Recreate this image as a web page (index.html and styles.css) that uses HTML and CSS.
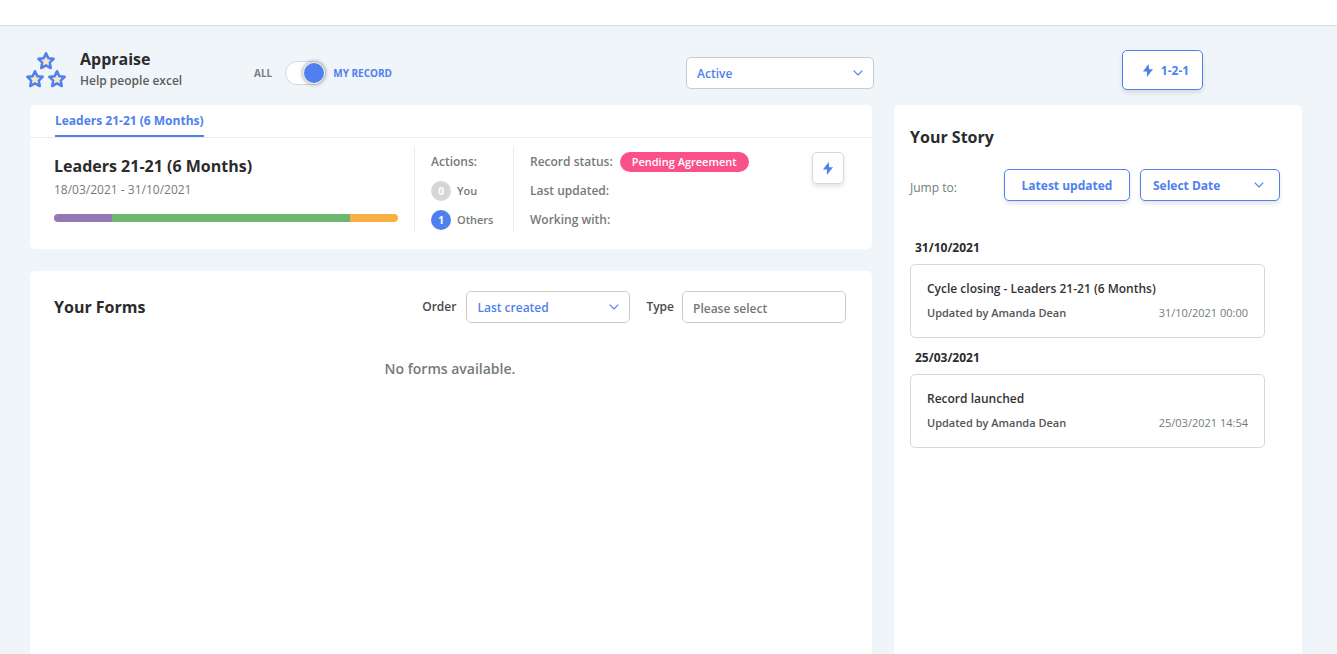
FILE: index.html
```html
<!DOCTYPE html>
<html lang="en">
<head>
<meta charset="utf-8">
<title>Appraise</title>
<link rel="stylesheet" href="styles.css">
</head>
<body>
<svg class="sprite" aria-hidden="true">
  <symbol id="bolt" viewBox="0 0 10 13"><path d="M5.6 0 0 7.6h3.9L3.9 13 10 5.2H6.2Z" fill="currentColor"/></symbol>
  <symbol id="chevron" viewBox="0 0 10 6"><path d="M.7.7 5 5 9.3.7" fill="none" stroke="currentColor" stroke-width="1.2"/></symbol>
  <symbol id="star" viewBox="0 0 20 20"><path d="M10 2.3l2.3 4.9 5.3.7-3.9 3.7 1 5.4-4.7-2.6-4.7 2.6 1-5.4-3.9-3.7 5.3-.7z" fill="#f5e6c8" stroke="#4f80ee" stroke-width="2.6" stroke-linejoin="round"/><path d="M10 6l1.4 2.8 3 .4-2.2 2.1.6 3-2.8-1.5-2.8 1.5.6-3-2.2-2.1 3-.4z" fill="#f5e6c8"/></symbol>
</svg>
<div class="topbar"></div>
<header class="header">
  <div class="header-main">
    <svg class="logo" viewBox="0 0 40 38" aria-hidden="true">
      <use href="#star" x="10" y="0" width="20" height="20"/>
      <use href="#star" x="-1" y="18" width="20" height="20"/>
      <use href="#star" x="21" y="18" width="20" height="20"/>
    </svg>
    <div class="brand">
      <h1 class="title">Appraise</h1>
      <p class="tagline">Help people excel</p>
    </div>
    <label class="toggle">
      <span>ALL</span>
      <input class="switch" type="checkbox" role="switch" checked>
      <span class="toggle-on">MY RECORD</span>
    </label>
    <div class="select-wrap status-filter">
      <select class="field" aria-label="Status"><option>Active</option></select>
      <svg class="chevron"><use href="#chevron"/></svg>
    </div>
  </div>
  <div class="header-side">
    <button class="btn btn-large"><svg class="bolt"><use href="#bolt"/></svg>1-2-1</button>
  </div>
</header>
<main class="columns">
  <div class="main-column">
    <section class="panel">
      <nav class="tabs"><a class="tab" href="#record">Leaders 21-21 (6 Months)</a></nav>
      <div class="record" id="record">
        <div class="summary">
          <h2 class="title">Leaders 21-21 (6 Months)</h2>
          <p class="dates">18/03/2021 - 31/10/2021</p>
          <div class="progress">
            <span class="purple" style="width:17%"></span>
            <span class="green" style="width:69%"></span>
            <span class="orange" style="width:14%"></span>
          </div>
        </div>
        <div class="facts actions">
          <p>Actions:</p>
          <p class="tally"><span class="count">0</span>You</p>
          <p class="tally"><span class="count count-active">1</span>Others</p>
        </div>
        <div class="facts details">
          <p>Record status: <span class="pill">Pending Agreement</span></p>
          <p>Last updated:</p>
          <p>Working with:</p>
        </div>
        <button class="icon-btn" aria-label="Quick actions"><svg class="bolt"><use href="#bolt"/></svg></button>
      </div>
    </section>
    <section class="panel forms">
      <div class="forms-head">
        <h2 class="title">Your Forms</h2>
        <label for="order">Order</label>
        <div class="select-wrap forms-field">
          <select class="field" id="order"><option>Last created</option></select>
          <svg class="chevron"><use href="#chevron"/></svg>
        </div>
        <label class="type-label" for="type">Type</label>
        <input class="field forms-field" id="type" type="text" placeholder="Please select">
      </div>
      <p class="empty">No forms available.</p>
    </section>
  </div>
  <aside class="panel story">
    <h2 class="title">Your Story</h2>
    <div class="jump">
      <span class="jump-label">Jump to:</span>
      <button class="btn btn-latest">Latest updated</button>
      <div class="select-wrap">
        <select class="btn date-select" aria-label="Select date"><option>Select Date</option></select>
        <svg class="chevron date-chevron"><use href="#chevron"/></svg>
      </div>
    </div>
    <h3 class="day">31/10/2021</h3>
    <article class="event">
      <p class="event-name">Cycle closing - Leaders 21-21 (6 Months)</p>
      <p class="event-meta"><span>Updated by Amanda Dean</span><time>31/10/2021 00:00</time></p>
    </article>
    <h3 class="day">25/03/2021</h3>
    <article class="event">
      <p class="event-name">Record launched</p>
      <p class="event-meta"><span>Updated by Amanda Dean</span><time>25/03/2021 14:54</time></p>
    </article>
  </aside>
</main>
</body>
</html>
```
FILE: styles.css
```css
* { box-sizing: border-box; }
body {
  margin: 0;
  min-height: 100vh;
  display: flex;
  flex-direction: column;
  background: #f0f5fa;
  color: #4a4a4a;
  font: 600 12px/20px "Open Sans", sans-serif;
}
h1, h2, h3, p { margin: 0; }
button, select, input { font: inherit; margin: 0; }
.sprite { position: absolute; width: 0; height: 0; }
.topbar { height: 26px; background: #fff; border-bottom: 1px solid #d9dcdf; }
.title { font-size: 16px; line-height: 24px; font-weight: 700; color: #2b2b2b; }

.header, .columns {
  display: grid;
  grid-template-columns: minmax(0, 1fr) 408px;
  column-gap: 22px;
  padding: 0 35px 0 30px;
}
.header { height: 79px; }
.header-main { display: flex; align-items: center; padding-top: 14px; margin: 0 -2px 0 -4px; }
.header-side { display: flex; justify-content: flex-end; align-items: center; padding: 8px 99px 0 0; }
.logo { width: 40px; height: 38px; margin: 0 14px 5px 0; }
.brand { width: 174px; padding-bottom: 8px; }
.tagline { color: #5a5e60; }
.toggle { display: flex; align-items: center; gap: 7px; font-size: 10px; font-weight: 700; color: #7b7f82; }
.toggle > :first-child { margin-right: 6px; }
.toggle-on { color: #4f80ee; }
.switch {
  appearance: none;
  width: 41px;
  height: 24px;
  padding: 1px;
  border: 1px solid #d5d8da;
  border-radius: 12px;
  background: #fff;
}
.switch::before {
  content: "";
  display: block;
  width: 20px;
  height: 20px;
  margin-left: auto;
  border-radius: 50%;
  background: #4f80ee;
  box-shadow: 0 0 0 1px #eee, 0 0 4px 1px #888;
}
.select-wrap { position: relative; }
.status-filter { width: 188px; margin-left: auto; }
.field {
  appearance: none;
  display: block;
  width: 100%;
  height: 32px;
  padding: 2px 10px 0;
  border: 1px solid #c9cbcc;
  border-radius: 5px;
  background: #fff;
  color: #4f80ee;
}
.field::placeholder { color: #757575; opacity: 1; }
.chevron { position: absolute; right: 11px; top: 13px; width: 10px; height: 6px; color: #4f80ee; pointer-events: none; }
.bolt { width: 10px; height: 13px; color: #4f80ee; }
.btn {
  display: flex;
  align-items: center;
  justify-content: center;
  height: 32px;
  padding: 2px 16px 0;
  border: 1px solid #4f80ee;
  border-radius: 5px;
  background: #fff;
  color: #4f80ee;
  font-weight: 700;
  box-shadow: 0 3px 4px rgba(0, 0, 0, .1);
}
.btn-large { width: 81px; height: 40px; gap: 8px; padding: 2px 0 0 7px; }
.btn-latest { width: 126px; }

.columns { flex: 1; }
.main-column { display: flex; flex-direction: column; gap: 22px; }
.panel { background: #fff; border-radius: 5px; }
.tabs { display: flex; height: 33px; padding: 0 25px; border-bottom: 1px solid #e9ebec; }
.tab { height: 32px; line-height: 32px; border-bottom: 2px solid #4f80ee; color: #4f80ee; font-weight: 700; text-decoration: none; }
.record { display: flex; align-items: flex-start; padding: 8px 28px 16px 24px; }
.summary { flex: 1; padding: 8px 16px 0 0; }
.dates { color: #757a7a; font-weight: 500; line-height: 24px; }
.progress { display: flex; height: 8px; margin-top: 12px; border-radius: 4px; overflow: hidden; }
.purple { background: #9478b5; }
.green { background: #6eb56e; }
.orange { background: #fbae42; }
.facts { height: 87px; padding: 6px 16px 0; border-left: 1px solid #eceded; color: #757a7a; }
.facts p { display: flex; align-items: center; height: 20px; margin-bottom: 9px; }
.facts .tally { font-size: 11px; }
.actions { width: 99px; }
.details { width: 299px; }
.count { width: 20px; height: 20px; margin-right: 6px; border-radius: 50%; background: #d6d6d6; color: #fff; font-size: 10px; font-weight: 700; text-align: center; }
.count-active { background: #4f80ee; }
.pill { height: 20px; margin-left: 7px; padding: 0 12px; border-radius: 10px; background: #fb5189; color: #fff; font-size: 11px; }
.icon-btn {
  display: flex;
  align-items: center;
  justify-content: center;
  width: 32px;
  height: 32px;
  margin-top: 6px;
  padding: 0;
  border: 1px solid #d6d8d9;
  border-radius: 5px;
  background: #fff;
  box-shadow: 0 3px 4px rgba(0, 0, 0, .1);
}
.forms { flex: 1; padding: 20px 26px 20px 24px; border-radius: 5px 5px 0 0; }
.forms-head { display: flex; align-items: center; }
.forms-head label { margin-right: 10px; }
.forms-head .type-label { margin: 0 8px 0 16px; }
.forms-head .title { margin-right: auto; }
.forms-field { width: 164px; }
.empty { margin-top: 36px; font-size: 14px; text-align: center; color: #757a7a; }

.story { padding: 20px 22px 20px 16px; border-radius: 5px 5px 0 0; }
.jump { display: flex; align-items: center; gap: 10px; margin: 20px 0 37px; }
.jump-label { margin-right: auto; padding-top: 5px; color: #757a7a; font-weight: 500; }
.date-select { appearance: none; width: 140px; padding: 2px 12px 0; }
.date-chevron { right: 16px; }
.day { padding-left: 5px; font-size: 12px; line-height: 20px; font-weight: 700; color: #2b2b2b; }
.event { height: 74px; margin: 6px 15px 10px 0; padding: 14px 16px; border: 1px solid #d6d8d9; border-radius: 5px; }
.event-name { color: #333; }
.event-meta { display: flex; justify-content: space-between; margin-top: 4px; font-size: 11px; color: #555; }
.event-meta time { color: #757a7a; font-weight: 500; }
```
